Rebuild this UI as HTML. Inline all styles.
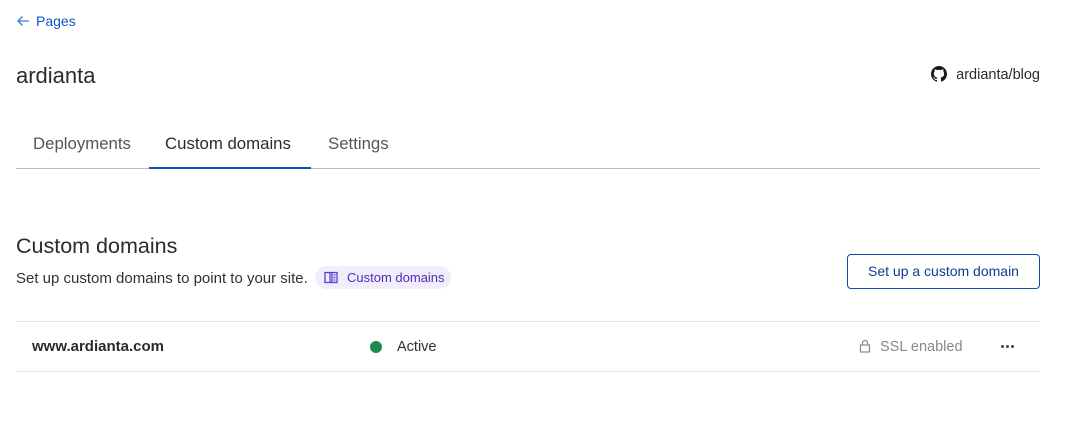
<!DOCTYPE html>
<html><head><meta charset="utf-8"><style>
body{margin:0;width:1070px;height:432px;background:#fff;font-family:"Liberation Sans",sans-serif;color:#313131;position:relative;overflow:hidden}
.a{position:absolute;white-space:nowrap}
</style></head><body>
<div class="a" style="left:16px;top:12px;font-size:14px;color:#0b57c4;line-height:18px">
<svg width="14" height="12" viewBox="0 0 14 12" style="vertical-align:-1px;margin-right:6px"><path d="M13 6H2M6.5 1.5L2 6l4.5 4.5" fill="none" stroke="#3b7dd8" stroke-width="1.3"/></svg>Pages</div>
<div class="a" style="left:16px;top:62px;font-size:22px;line-height:27px;color:#2b2b2b">ardianta</div>
<div class="a" style="right:30px;top:66px;font-size:14.5px;line-height:18px;color:#2b2b2b">
<svg width="16" height="16" viewBox="0 0 16 16" style="vertical-align:-3px;margin-right:9px"><path fill="#1a1a1a" d="M8 0C3.58 0 0 3.58 0 8c0 3.54 2.290 6.53 5.47 7.59.4.07.55-.17.55-.38v-1.33c-2.23.48-2.7-1.07-2.7-1.07-.36-.92-.89-1.17-.89-1.17-.73-.5.06-.49.06-.49.8.06 1.23.83 1.23.83.71 1.22 1.87.87 2.33.66.07-.52.28-.87.5-1.070-1.78-.2-3.64-.89-3.64-3.95 0-.87.31-1.59.82-2.15-.08-.2-.36-1.02.08-2.12 0 0 .67-.21 2.2.82a7.6 7.6 0 0 1 4 0c1.53-1.04 2.2-.82 2.2-.82.44 1.1.16 1.92.08 2.12.51.56.82 1.27.82 2.150 0 3.07-1.870 3.75-3.65 3.95.29.25.54.73.54 1.48v2.2c0 .21.15.46.55.38A8.01 8.01 0 0 0 16 8c0-4.42-3.58-8-8-8z"/></svg>ardianta/blog</div>
<div class="a" style="left:33px;top:134px;font-size:16.8px;line-height:20px;color:#555">Deployments</div>
<div class="a" style="left:165px;top:134px;font-size:16.8px;line-height:20px;color:#2b2b2b">Custom domains</div>
<div class="a" style="left:328px;top:134px;font-size:16.8px;line-height:20px;color:#555">Settings</div>
<div class="a" style="left:16px;top:168px;width:1024px;height:1px;background:#bdbdbd"></div>
<div class="a" style="left:149px;top:167px;width:162px;height:2px;background:#0a52bf"></div>
<div class="a" style="left:16px;top:233px;font-size:21.5px;line-height:26px;color:#2b2b2b">Custom domains</div>
<div class="a" style="left:16px;top:270px;font-size:15px;line-height:18px;color:#313131">Set up custom domains to point to your site.</div>
<div class="a" style="left:315px;top:266px;width:136px;height:23px;border-radius:12px;background:#f1edfd"></div>
<div class="a" style="left:324px;top:269px;font-size:13px;line-height:17px;color:#4b2fb5">
<svg width="14" height="13" viewBox="0 0 14 13" style="vertical-align:-2px;margin-right:9px"><path d="M1 1.5h5v10H1zM8 1.5h5v10H8zM6 1.5h2M6 11.5h2M9.5 4h2M9.5 6.5h2M9.5 9h2" fill="none" stroke="#5b3fd0" stroke-width="1.3"/></svg>Custom domains</div>
<div class="a" style="left:847px;top:254px;width:191px;height:33px;border:1px solid #0b4fa6;border-radius:4px"></div>
<div class="a" style="left:847px;top:262px;width:193px;text-align:center;font-size:14px;line-height:18px;color:#0b3f8c">Set up a custom domain</div>
<div class="a" style="left:16px;top:321px;width:1024px;height:1px;background:#e3e3e3"></div>
<div class="a" style="left:16px;top:371px;width:1024px;height:1px;background:#e3e3e3"></div>
<div class="a" style="left:32px;top:338px;font-size:15px;font-weight:bold;line-height:18px;color:#2b2b2b">www.ardianta.com</div>
<div class="a" style="left:370px;top:341px;width:12px;height:12px;border-radius:50%;background:#1f8a4c"></div>
<div class="a" style="left:397px;top:338px;font-size:14.5px;line-height:18px;color:#313131">Active</div>
<svg class="a" style="left:859px;top:339px" width="12" height="14" viewBox="0 0 12 14"><rect x="1.5" y="6" width="9" height="7" fill="none" stroke="#8a8a8a" stroke-width="1.2"/><path d="M3.5 6V4a2.5 2.5 0 0 1 5 0v2" fill="none" stroke="#8a8a8a" stroke-width="1.2"/></svg>
<div class="a" style="left:880px;top:338px;font-size:14.5px;line-height:18px;color:#8a8a8a">SSL enabled</div>
<div class="a" style="left:1001px;top:345px;width:3px;height:3px;border-radius:50%;background:#444"></div>
<div class="a" style="left:1006px;top:345px;width:3px;height:3px;border-radius:50%;background:#444"></div>
<div class="a" style="left:1011px;top:345px;width:3px;height:3px;border-radius:50%;background:#444"></div>
</body></html>
